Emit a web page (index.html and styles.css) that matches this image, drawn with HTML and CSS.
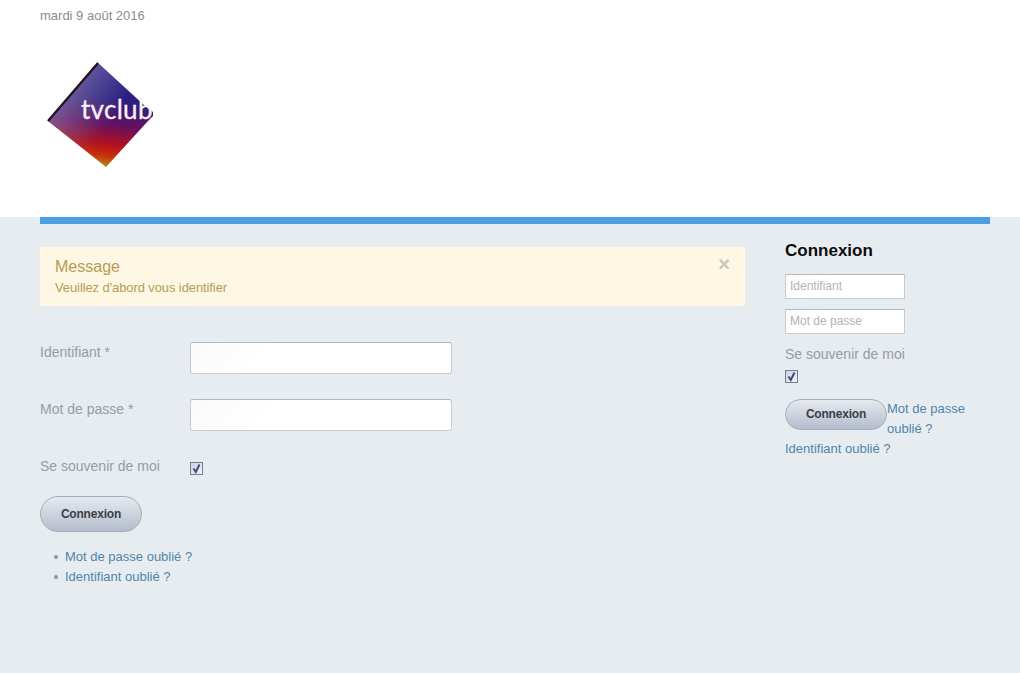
FILE: index.html
```html
<!DOCTYPE HTML>
<html>
<head>
  <title>tvclub - Connexion</title>
  <meta charset="UTF-8" name="viewport" content="width=device-width, initial-scale=1">
  <link rel="stylesheet" href="styles.css">
</head>
<body>
  <header class="header">
    <p class="date">mardi 9 août 2016</p>
    <div class="logo">
      <svg width="108" height="108" viewBox="0 0 108 108">
        <defs>
          <linearGradient id="logoFill" gradientUnits="userSpaceOnUse" x1="68" y1="10" x2="56" y2="107">
            <stop offset="0" stop-color="#23208a"/>
            <stop offset="0.3" stop-color="#2c1f80"/>
            <stop offset="0.55" stop-color="#641062"/>
            <stop offset="0.76" stop-color="#b5121c"/>
            <stop offset="0.88" stop-color="#c8340c"/>
            <stop offset="1" stop-color="#a89a10"/>
          </linearGradient>
          <linearGradient id="logoSheen" gradientUnits="userSpaceOnUse" x1="18" y1="30" x2="62" y2="62">
            <stop offset="0" stop-color="#8a7aa8" stop-opacity="0.7"/>
            <stop offset="1" stop-color="#8a7aa8" stop-opacity="0"/>
          </linearGradient>
        </defs>
        <polygon points="51,2 97,44 106,51 106,55 101,60 59,106 1,60" fill="url(#logoFill)"/>
        <polygon points="51,2 97,44 106,51 106,55 101,60 59,106 1,60" fill="url(#logoSheen)"/>
        <path d="M51,2 L1,60" stroke="#26101e" stroke-width="2.4" fill="none"/>
        <text class="logo-text" x="34" y="58">tvclub</text>
      </svg>
    </div>
  </header>
  <div class="rule"></div>

  <div class="content">
    <main class="main">
      <div class="message">
        <span class="message-close">×</span>
        <h4>Message</h4>
        <p>Veuillez d'abord vous identifier</p>
      </div>

      <form class="login-form">
        <div class="form-row">
          <label class="form-label">Identifiant *</label>
          <input class="input input-large" type="text">
        </div>
        <div class="form-row">
          <label class="form-label">Mot de passe *</label>
          <input class="input input-large" type="password">
        </div>
        <div class="form-row form-row-check">
          <label class="form-label">Se souvenir de moi</label>
          <span class="check">
            <svg width="11" height="11" viewBox="0 0 11 11"><path d="M2.5 5.5 L4.8 9 L8.5 1.5" stroke="#3f4a7c" stroke-width="2" fill="none"/></svg>
          </span>
        </div>
        <button class="button button-large" type="button">Connexion</button>
      </form>

      <ul class="links">
        <li><a href="#">Mot de passe oublié ?</a></li>
        <li><a href="#">Identifiant oublié ?</a></li>
      </ul>
    </main>

    <aside class="side">
      <h3>Connexion</h3>
      <input class="input input-small" type="text" placeholder="Identifiant">
      <input class="input input-small" type="password" placeholder="Mot de passe">
      <p class="side-remember">Se souvenir de moi</p>
      <span class="check">
        <svg width="11" height="11" viewBox="0 0 11 11"><path d="M2.5 5.5 L4.8 9 L8.5 1.5" stroke="#3f4a7c" stroke-width="2" fill="none"/></svg>
      </span>
      <div class="side-actions">
        <button class="button button-small" type="button">Connexion</button>
        <a href="#">Mot de passe oublié ?</a>
      </div>
      <a class="side-last" href="#">Identifiant oublié ?</a>
    </aside>
  </div>
</body>
</html>
```

FILE: styles.css
```css
html {
  font-family: 'Liberation Sans', Arial, sans-serif;
  background-color: #e7ecf1;
  color: #969ca4;
}
body {
  margin: 0;
  font-size: 14px;
}
a {
  color: #4f86ab;
  text-decoration: none;
}
.header {
  height: 217px;
  box-sizing: border-box;
  padding: 8px 40px 0;
  background-color: #ffffff;
}
.date {
  margin: 0;
  font-size: 13px;
  line-height: 15px;
  color: #8c8c8c;
}
.logo {
  margin: 38px 0 0 7px;
  height: 108px;
}
.logo svg {
  display: block;
}
.logo-text {
  font-family: 'Lato', 'Liberation Sans', sans-serif;
  font-size: 26px;
  letter-spacing: 0.3px;
  fill: #f8f3fa;
  stroke: #f8f3fa;
  stroke-width: 0.3px;
}
.rule {
  height: 7px;
  margin: 0 30px 0 40px;
  background-color: #4a9fe0;
}
.content {
  display: flex;
  padding: 17px 30px 0 40px;
}
.main {
  width: 705px;
  padding-top: 6px;
}
.side {
  width: 205px;
  margin-left: 40px;
}

.message {
  position: relative;
  height: 59px;
  box-sizing: border-box;
  padding: 10px 15px;
  background-color: #fdf7e3;
  color: #b89c58;
}
.message h4 {
  margin: 0;
  font-size: 16px;
  font-weight: normal;
  line-height: 19px;
}
.message p {
  margin: 3px 0 0;
  font-size: 13px;
  letter-spacing: -0.1px;
  line-height: 17px;
}
.message-close {
  position: absolute;
  top: 7px;
  right: 15px;
  font-size: 20px;
  font-weight: bold;
  line-height: 20px;
  color: #c9c7bd;
}

.login-form {
  margin-top: 36px;
}
.form-row {
  display: flex;
  align-items: flex-start;
  height: 57px;
}
.form-row-check {
  height: 40px;
}
.form-label {
  width: 150px;
  padding-top: 1px;
  line-height: 18px;
}
.input {
  display: block;
  box-sizing: border-box;
  border: 1px solid #c8ccd0;
  border-top-color: #b4b8bc;
  background: linear-gradient(135deg, #fafafb, #ffffff 30%);
  font-family: inherit;
  outline: none;
}
.input-large {
  width: 262px;
  height: 32px;
  border-radius: 3px;
}
.input-small {
  width: 120px;
  height: 25px;
  padding: 0 4px 2px;
  margin-bottom: 10px;
  font-size: 12px;
}
.input-small::placeholder {
  color: #b4b4b4;
}
.check {
  display: flex;
  align-items: center;
  justify-content: center;
  width: 13px;
  height: 13px;
  box-sizing: border-box;
  border: 1px solid #777f88;
  background: linear-gradient(135deg, #c9d2e6, #f2f4fa);
}
.form-row-check .check {
  margin-top: 6px;
}
.button {
  display: block;
  box-sizing: border-box;
  border: 1px solid #a3adbb;
  border-radius: 18px;
  background: linear-gradient(#e6e9ef, #b4bdcc);
  color: #3a3f48;
  font-family: inherit;
  font-size: 12px;
  font-weight: bold;
  letter-spacing: -0.2px;
  padding: 0;
}
.button-large {
  width: 102px;
  height: 36px;
}
.button-small {
  flex: none;
  width: 102px;
  height: 31px;
  padding-bottom: 2px;
}

.links {
  margin: 15px 0 0;
  padding: 0 0 0 14px;
  list-style: none;
  font-size: 13px;
  line-height: 20px;
}
.links li::before {
  content: "";
  display: inline-block;
  width: 4px;
  height: 4px;
  margin-right: 7px;
  border-radius: 50%;
  background-color: #8f969e;
  vertical-align: 2px;
}

.side h3 {
  margin: 0 0 13px;
  font-size: 17px;
  font-weight: bold;
  line-height: 20px;
  color: #0c0c0c;
}
.side-remember {
  margin: 0 0 6px;
  line-height: 20px;
}
.side-actions {
  display: flex;
  margin-top: 16px;
  font-size: 13px;
  line-height: 20px;
}
.side-last {
  display: block;
  font-size: 13px;
  line-height: 20px;
}
```
